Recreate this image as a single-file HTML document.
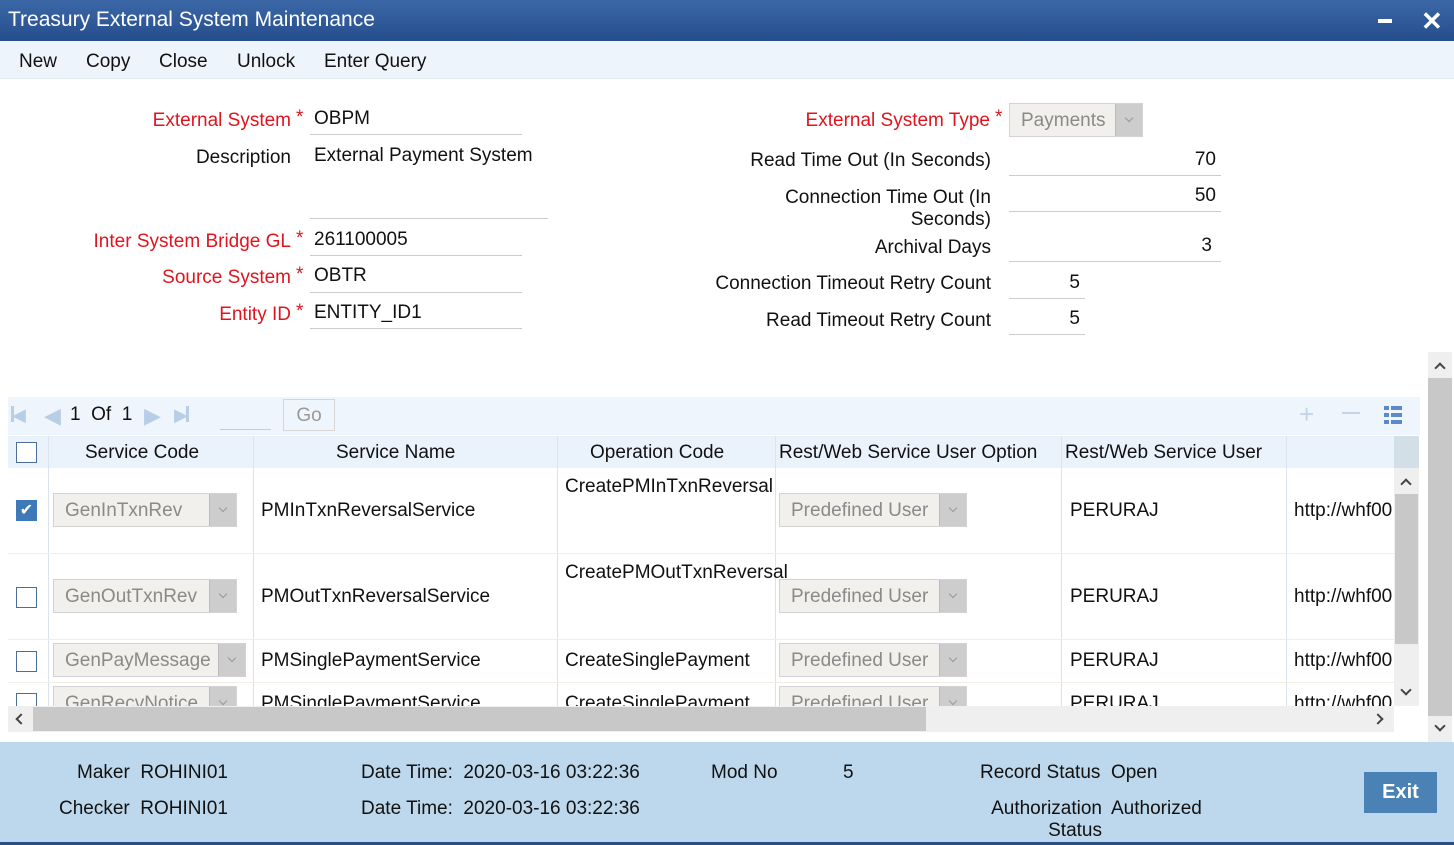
<!DOCTYPE html>
<html><head><meta charset="utf-8"><style>
*{box-sizing:border-box;margin:0;padding:0}
body{width:1454px;height:845px;position:relative;overflow:hidden;background:#fff;font-family:"Liberation Sans",sans-serif;font-size:19px;color:#111}
.a{position:absolute;white-space:nowrap}
.r{text-align:right}
.red{color:#e0141e}
.st{position:absolute;color:#e0141e;font-size:19px}
.ln{position:absolute;height:1px;background:#ccc}
.sel{position:absolute;height:34px;background:#f1f0ec;border:1px solid #d3d3d3;color:#8a8a8a;padding:6px 11px;white-space:nowrap}
.sel i{position:absolute;right:0;top:0;width:27px;height:32px;background:#cdcdcd;border-left:1px solid #bbb}
.sel i:after{content:"";position:absolute;left:10px;top:11px;width:5px;height:5px;border-right:1px solid #999;border-bottom:1px solid #999;transform:rotate(45deg)}
.cb{position:absolute;width:21px;height:21px;border:1.5px solid #4a6e96;background:#fff}
.vl{position:absolute;width:1px;background:#dbe3ee}
.hl{position:absolute;height:1px;background:#f3ede4}
.ch{position:absolute;width:8px;height:8px;border-left:2px solid #444;border-top:2px solid #444}
</style></head><body>
<div class="a" style="left:0;top:0;width:1454px;height:41px;background:linear-gradient(#3c68a8,#254d8c)"></div>
<div class="a" style="left:8px;top:8px;color:#fff;font-size:21px">Treasury External System Maintenance</div>
<div class="a" style="left:1378px;top:19px;width:14px;height:4px;background:#fff"></div>
<div class="a" style="left:1421px;top:6px;color:#fff;font-size:26px;font-weight:bold">✕</div>
<div class="a" style="left:0;top:41px;width:1454px;height:38px;background:#eef4fb;border-bottom:1px solid #e0e8f0"></div>
<div class="a" style="left:19px;top:51px">New</div>
<div class="a" style="left:86px;top:51px">Copy</div>
<div class="a" style="left:159px;top:51px">Close</div>
<div class="a" style="left:237px;top:51px">Unlock</div>
<div class="a" style="left:324px;top:51px">Enter Query</div>

<div class="a r red" style="right:1163px;top:110px">External System</div><div class="st" style="left:296px;top:107px">*</div>
<div class="a" style="left:314px;top:108px">OBPM</div><div class="ln" style="left:310px;top:134px;width:212px"></div>
<div class="a r" style="right:1163px;top:147px">Description</div>
<div class="a" style="left:314px;top:145px">External Payment System</div>
<div class="ln" style="left:310px;top:218px;width:238px"></div>
<div class="a r red" style="right:1163px;top:231px">Inter System Bridge GL</div><div class="st" style="left:296px;top:228px">*</div>
<div class="a" style="left:314px;top:229px">261100005</div><div class="ln" style="left:310px;top:255px;width:212px"></div>
<div class="a r red" style="right:1163px;top:267px">Source System</div><div class="st" style="left:296px;top:264px">*</div>
<div class="a" style="left:314px;top:265px">OBTR</div><div class="ln" style="left:310px;top:292px;width:212px"></div>
<div class="a r red" style="right:1163px;top:304px">Entity ID</div><div class="st" style="left:296px;top:301px">*</div>
<div class="a" style="left:314px;top:302px">ENTITY_ID1</div><div class="ln" style="left:310px;top:328px;width:212px"></div>

<div class="a r red" style="right:464px;top:110px">External System Type</div><div class="st" style="left:995px;top:107px">*</div>
<div class="sel" style="left:1009px;top:103px;width:134px">Payments<i></i></div>
<div class="a r" style="right:463px;top:150px">Read Time Out (In Seconds)</div>
<div class="a r" style="right:238px;top:149px">70</div><div class="ln" style="left:1009px;top:175px;width:212px"></div>
<div class="a r" style="right:463px;top:187px;line-height:22px">Connection Time Out (In<br>Seconds)</div>
<div class="a r" style="right:238px;top:185px">50</div><div class="ln" style="left:1009px;top:211px;width:212px"></div>
<div class="a r" style="right:463px;top:237px">Archival Days</div>
<div class="a r" style="right:242px;top:235px">3</div><div class="ln" style="left:1009px;top:261px;width:212px"></div>
<div class="a r" style="right:463px;top:273px">Connection Timeout Retry Count</div>
<div class="a r" style="right:374px;top:272px">5</div><div class="ln" style="left:1009px;top:298px;width:76px"></div>
<div class="a r" style="right:463px;top:310px">Read Timeout Retry Count</div>
<div class="a r" style="right:374px;top:308px">5</div><div class="ln" style="left:1009px;top:334px;width:76px"></div>

<!-- outer vscroll -->
<div class="a" style="left:1428px;top:352px;width:24px;height:390px;background:#efefef"></div>
<div class="a" style="left:1428px;top:378px;width:24px;height:338px;background:#c8c8c8"></div>
<div class="ch" style="left:1436px;top:364px;transform:rotate(45deg)"></div>
<div class="ch" style="left:1436px;top:722px;transform:rotate(225deg)"></div>

<!-- table -->
<div class="a" style="left:8px;top:397px;width:1412px;height:38px;background:#eef5fc"></div>
<div class="a" style="left:12px;top:405px;color:#b8cde6;font-size:18px">◀︎</div>
<div class="a" style="left:11px;top:406px;width:3px;height:16px;background:#b8cde6"></div>
<div class="a" style="left:44px;top:403px;color:#b8cde6;font-size:22px">◀</div>
<div class="a" style="left:70px;top:404px">1&nbsp; Of&nbsp; 1</div>
<div class="a" style="left:144px;top:403px;color:#b8cde6;font-size:22px">▶</div>
<div class="a" style="left:174px;top:405px;color:#b8cde6;font-size:18px">▶︎</div>
<div class="a" style="left:186px;top:406px;width:3px;height:16px;background:#b8cde6"></div>
<div class="ln" style="left:220px;top:429px;width:51px"></div>
<div class="a" style="left:283px;top:399px;width:52px;height:32px;border:1px solid #d6d6d6;color:#999;text-align:center;padding-top:5px">Go</div>
<div class="a" style="left:1299px;top:399px;color:#c2d3ea;font-size:26px">+</div>
<div class="a" style="left:1342px;top:412px;width:18px;height:2px;background:#c2d3ea"></div>
<div class="a" style="left:1384px;top:406px;width:5px;height:4px;background:#5a8ac8;box-shadow:0 7px #5a8ac8,0 14px #5a8ac8"></div>
<div class="a" style="left:1391px;top:406px;width:11px;height:4px;background:#5a8ac8;box-shadow:0 7px #5a8ac8,0 14px #5a8ac8"></div>

<div class="a" style="left:8px;top:436px;width:1386px;height:32px;background:#eaf3fc"></div>
<div class="a" style="left:1394px;top:436px;width:25px;height:32px;background:#d3dfe6"></div>
<div class="cb" style="left:16px;top:442px"></div>
<div class="a" style="left:85px;top:442px">Service Code</div>
<div class="a" style="left:336px;top:442px">Service Name</div>
<div class="a" style="left:590px;top:442px">Operation Code</div>
<div class="a" style="left:779px;top:442px">Rest/Web Service User Option</div>
<div class="a" style="left:1065px;top:442px">Rest/Web Service User</div>
<div class="vl" style="left:48px;top:436px;height:270px"></div>
<div class="vl" style="left:253px;top:436px;height:270px"></div>
<div class="vl" style="left:557px;top:436px;height:270px"></div>
<div class="vl" style="left:775px;top:436px;height:270px"></div>
<div class="vl" style="left:1061px;top:436px;height:270px"></div>
<div class="vl" style="left:1286px;top:436px;height:270px"></div>
<div class="hl" style="left:8px;top:553px;width:1386px"></div>
<div class="hl" style="left:8px;top:639px;width:1386px"></div>
<div class="hl" style="left:8px;top:682px;width:1386px"></div>

<div class="a" style="left:16px;top:500px;width:21px;height:21px;background:#3f7ab8;color:#fff;font-size:16px;text-align:center;line-height:21px">✔</div>
<div class="sel" style="left:53px;top:493px;width:184px">GenInTxnRev<i></i></div>
<div class="a" style="left:261px;top:500px">PMInTxnReversalService</div>
<div class="a" style="left:565px;top:476px">CreatePMInTxnReversal</div>
<div class="sel" style="left:779px;top:493px;width:188px">Predefined User<i></i></div>
<div class="a" style="left:1070px;top:500px">PERURAJ</div>
<div class="a" style="left:1294px;top:500px">http://whf00</div>

<div class="cb" style="left:16px;top:587px"></div>
<div class="sel" style="left:53px;top:579px;width:184px">GenOutTxnRev<i></i></div>
<div class="a" style="left:261px;top:586px">PMOutTxnReversalService</div>
<div class="a" style="left:565px;top:562px">CreatePMOutTxnReversal</div>
<div class="sel" style="left:779px;top:579px;width:188px">Predefined User<i></i></div>
<div class="a" style="left:1070px;top:586px">PERURAJ</div>
<div class="a" style="left:1294px;top:586px">http://whf00</div>

<div class="cb" style="left:16px;top:651px"></div>
<div class="sel" style="left:53px;top:643px;width:193px">GenPayMessage<i></i></div>
<div class="a" style="left:261px;top:650px">PMSinglePaymentService</div>
<div class="a" style="left:565px;top:650px">CreateSinglePayment</div>
<div class="sel" style="left:779px;top:643px;width:188px">Predefined User<i></i></div>
<div class="a" style="left:1070px;top:650px">PERURAJ</div>
<div class="a" style="left:1294px;top:650px">http://whf00</div>

<div class="a" style="left:8px;top:683px;width:1386px;height:23px;overflow:hidden">
<div class="cb" style="left:8px;top:10px"></div>
<div class="sel" style="left:45px;top:3px;width:184px">GenRecvNotice<i></i></div>
<div class="a" style="left:253px;top:10px">PMSinglePaymentService</div>
<div class="a" style="left:557px;top:10px">CreateSinglePayment</div>
<div class="sel" style="left:771px;top:3px;width:188px">Predefined User<i></i></div>
<div class="a" style="left:1062px;top:10px">PERURAJ</div>
<div class="a" style="left:1286px;top:10px">http://whf00</div>
</div>

<!-- inner vscroll -->
<div class="a" style="left:1394px;top:468px;width:25px;height:238px;background:#efefef"></div>
<div class="a" style="left:1395px;top:494px;width:23px;height:150px;background:#c8c8c8"></div>
<div class="ch" style="left:1402px;top:480px;transform:rotate(45deg)"></div>
<div class="ch" style="left:1402px;top:686px;transform:rotate(225deg)"></div>
<!-- hscroll -->
<div class="a" style="left:8px;top:706px;width:1386px;height:26px;background:#efefef"></div>
<div class="a" style="left:33px;top:707px;width:893px;height:24px;background:#c8c8c8"></div>
<div class="ch" style="left:17px;top:715px;transform:rotate(-45deg)"></div>
<div class="ch" style="left:1374px;top:715px;transform:rotate(135deg)"></div>

<!-- footer -->
<div class="a" style="left:0;top:742px;width:1454px;height:103px;background:#bdd8ec;border-bottom:3px solid #2a4f86"></div>
<div class="a" style="left:77px;top:762px">Maker&nbsp; ROHINI01</div>
<div class="a" style="left:59px;top:798px">Checker&nbsp; ROHINI01</div>
<div class="a" style="left:361px;top:762px">Date Time:&nbsp; 2020-03-16 03:22:36</div>
<div class="a" style="left:361px;top:798px">Date Time:&nbsp; 2020-03-16 03:22:36</div>
<div class="a" style="left:711px;top:762px">Mod No</div>
<div class="a" style="left:843px;top:762px">5</div>
<div class="a" style="left:980px;top:762px">Record Status&nbsp; Open</div>
<div class="a r" style="right:352px;top:798px;line-height:22px">Authorization<br>Status</div>
<div class="a" style="left:1111px;top:798px">Authorized</div>
<div class="a" style="left:1364px;top:772px;width:73px;height:41px;background:#4a82b5;color:#fff;font-weight:bold;font-size:20px;text-align:center;line-height:41px">Exit</div>
</body></html>
